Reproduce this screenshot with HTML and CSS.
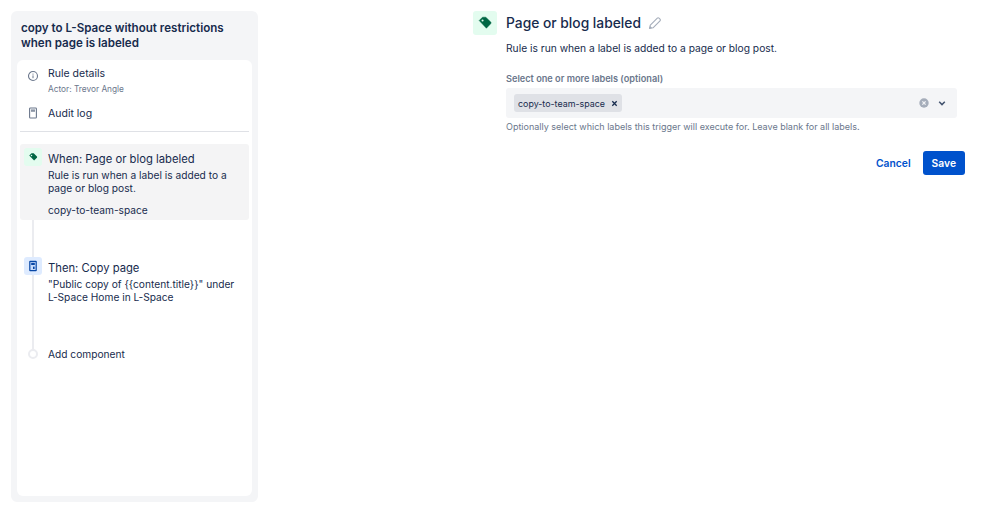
FILE: index.html
```html
<!DOCTYPE html>
<html lang="en">
<head>
<meta charset="utf-8">
<title>Page or blog labeled</title>
<link rel="stylesheet" href="styles.css">
</head>
<body>
<div class="page">
  <aside class="sidebar">
    <h1 class="rule-title">copy to L-Space without restrictions when page is labeled</h1>
    <div class="panel">
      <div class="meta-row details">
        <svg class="meta-icon" viewBox="0 0 12 12" width="12" height="12"><circle cx="6" cy="6" r="4.5" fill="none" stroke="#6b778c" stroke-width="1.1"/><rect x="5.5" y="5.4" width="1" height="2.8" fill="#6b778c"/><rect x="5.5" y="3.6" width="1" height="1" fill="#6b778c"/></svg>
        <div>
          <div class="meta-label">Rule details</div>
          <div class="meta-sub">Actor: Trevor Angle</div>
        </div>
      </div>
      <div class="meta-row audit">
        <svg class="meta-icon" viewBox="0 0 12 12" width="12" height="12"><rect x="2.6" y="1" width="6.8" height="10" rx=".8" fill="none" stroke="#6b778c" stroke-width="1.1"/><rect x="4" y="2.4" width="4" height="2.4" fill="#8993a4"/></svg>
        <div class="meta-label">Audit log</div>
      </div>
      <div class="divider"></div>
      <div class="steps">
        <div class="rail"></div>
        <div class="step when">
          <div class="step-icon green">
            <svg viewBox="0 0 12 12" width="10" height="10"><path d="M1.5 4.2 4.2 1.5h2.6l3.9 3.9a1 1 0 0 1 0 1.4L7.3 10.2 1.5 4.2Z" fill="#006644"/><circle cx="4.2" cy="4.2" r=".9" fill="#e3fcef"/></svg>
          </div>
          <div class="step-body">
            <div class="step-title">When: Page or blog labeled</div>
            <div class="step-text">Rule is run when a label is added to a page or blog post.</div>
            <div class="step-extra">copy-to-team-space</div>
          </div>
        </div>
        <div class="step then">
          <div class="step-icon blue">
            <svg viewBox="0 0 12 12" width="12" height="12"><rect x="2.2" y="0.8" width="7.6" height="10.4" rx="1" fill="#0747a6"/><rect x="3.4" y="2" width="5.2" height="8" fill="#c9dcfb"/><rect x="4.2" y="2.8" width="3.6" height="2.2" fill="#0747a6"/><rect x="6" y="6.6" width="1.6" height="2.4" fill="#0747a6"/></svg>
          </div>
          <div class="step-body">
            <div class="step-title">Then: Copy page</div>
            <div class="step-text">"Public copy of {{content.title}}" under L-Space Home in L-Space</div>
          </div>
        </div>
        <div class="step add">
          <div class="add-dot"></div>
          <div class="add-label">Add component</div>
        </div>
      </div>
    </div>
  </aside>
  <main class="editor">
    <header class="editor-head">
      <div class="head-icon">
        <svg viewBox="0 0 12 12" width="14" height="14"><path d="M1 3.9 3.9 1h2.8l4.2 4.2a1 1 0 0 1 0 1.4l-3.7 3.9L1 3.9Z" fill="#006644" stroke="#006644" stroke-width=".4" stroke-linejoin="round"/><circle cx="3.9" cy="3.9" r=".9" fill="#e3fcef"/></svg>
      </div>
      <h2 class="editor-title">Page or blog labeled</h2>
      <svg class="pencil" viewBox="0 0 14 14" width="14" height="14"><path d="M1.5 12.5l.8-3.4 7-7a1.2 1.2 0 0 1 1.7 0l1 1a1.2 1.2 0 0 1 0 1.7l-7 7-3.5.7Z" fill="none" stroke="#a5adba" stroke-width="1.1" stroke-linejoin="round"/><path d="M1.5 12.5l.6-2.6 2 2Z" fill="#a5adba"/></svg>
    </header>
    <div class="editor-body">
      <p class="description">Rule is run when a label is added to a page or blog post.</p>
      <div class="field-label">Select one or more labels (optional)</div>
      <div class="select">
        <span class="tag">copy-to-team-space<svg class="tag-x" viewBox="0 0 8 8" width="7" height="7"><path d="M1.5 1.5l5 5M6.5 1.5l-5 5" stroke="#172b4d" stroke-width="1.5"/></svg></span>
        <span class="select-actions">
          <svg viewBox="0 0 10 10" width="10" height="10"><circle cx="5" cy="5" r="4.7" fill="#a5adba"/><path d="M3.4 3.4l3.2 3.2M6.6 3.4l-3.2 3.2" stroke="#f4f5f7" stroke-width="1.2"/></svg>
          <svg viewBox="0 0 10 10" width="10" height="10"><path d="M2.2 3.8 5 6.6l2.8-2.8" fill="none" stroke="#42526e" stroke-width="1.5"/></svg>
        </span>
      </div>
      <div class="help">Optionally select which labels this trigger will execute for. Leave blank for all labels.</div>
    </div>
    <div class="buttons">
      <button class="btn link">Cancel</button>
      <button class="btn primary">Save</button>
    </div>
  </main>
</div>
</body>
</html>
```
FILE: styles.css
```css
* { box-sizing: border-box; }
html, body { margin: 0; height: 100%; background: #fff; }
body { font-family: Inter, "Liberation Sans", sans-serif; color: #172b4d; overflow: hidden; }
.page { display: flex; height: 513px; padding: 11px; }

.sidebar { width: 247px; height: 491px; background: #f4f5f7; border-radius: 6px; padding: 10px 6px 6px; display: flex; flex-direction: column; flex-shrink: 0; }
.rule-title { margin: 0 4px 9px; height: 30px; font-size: 11.6px; line-height: 15px; font-weight: 600; }
.panel { flex: 1; background: #fff; border-radius: 6px; padding: 7px 3px 0; }

.meta-row { display: flex; gap: 9px; padding-left: 7px; }
.meta-row .meta-icon { margin-top: 3px; flex-shrink: 0; }
.details { height: 38px; }
.audit { height: 26px; padding-top: 2px; }
.audit .meta-icon { margin-top: 0; }
.meta-label { font-size: 10.5px; line-height: 14px; }
.meta-sub { font-size: 8.3px; line-height: 12px; margin-top: 2px; color: #6b778c; }
.divider { height: 1px; background: #dfe1e6; }

.steps { position: relative; margin-top: 12px; }
.rail { position: absolute; left: 12px; top: 24px; width: 2px; height: 182px; background: #ebecf0; }
.step { position: relative; display: flex; gap: 6px; padding-left: 4px; }
.when { height: 76px; background: #f4f4f5; border-radius: 3px; padding-top: 4px; }
.then { margin-top: 37px; height: 90px; }
.add { height: 14px; align-items: center; gap: 10px; padding-left: 8px; }
.step-icon { width: 18px; height: 18px; border-radius: 3px; display: flex; align-items: center; justify-content: center; flex-shrink: 0; }
.green { background: #e3fcef; }
.blue { background: #deebff; }
.step-body { min-width: 0; padding-top: 4px; }
.step-title { font-size: 11.25px; line-height: 15px; }
.step-text { font-size: 10.2px; line-height: 13px; margin-top: 2px; }
.then .step-text { max-width: 192px; }
.step-extra { font-size: 10.2px; line-height: 13px; margin-top: 9px; }
.add-dot { width: 10px; height: 10px; border-radius: 50%; background: #fff; border: 2px solid #ebecf0; flex-shrink: 0; }
.add-label { font-size: 10.2px; line-height: 14px; }

.editor { width: 492px; margin-left: 215px; flex-shrink: 0; }
.editor-head { display: flex; align-items: center; height: 24px; }
.head-icon { width: 24px; height: 24px; border-radius: 3px; background: #e3fcef; display: flex; align-items: center; justify-content: center; }
.editor-title { margin: 0 0 0 9px; font-size: 13.8px; line-height: 24px; font-weight: 500; }
.pencil { margin-left: 7px; }
.editor-body { margin-left: 33px; width: 451px; }
.description { margin: 7px 0 0; font-size: 10.25px; line-height: 13px; }
.field-label { margin-top: 18px; font-size: 9.2px; line-height: 12px; font-weight: 600; color: #6b778c; }
.select { display: flex; align-items: center; justify-content: space-between; height: 30px; margin-top: 3px; padding: 0 10px 0 8px; background: #f4f5f7; border-radius: 3px; }
.tag { display: inline-flex; align-items: center; height: 18px; padding: 0 4px; background: #dfe1e6; border-radius: 3px; font-size: 8.9px; }
.tag-x { margin-left: 6px; }
.select-actions { display: flex; gap: 8px; align-items: center; }
.help { margin-top: 3px; font-size: 9px; line-height: 12px; color: #6b778c; }

.buttons { display: flex; justify-content: flex-end; align-items: center; margin-top: 18px; gap: 3px; }
.btn { font: 600 10.3px/24px Inter, "Liberation Sans", sans-serif; height: 24px; padding: 0 9px; border: 0; border-radius: 3px; }
.link { background: none; color: #0052cc; }
.primary { background: #0052cc; color: #fff; }
```
